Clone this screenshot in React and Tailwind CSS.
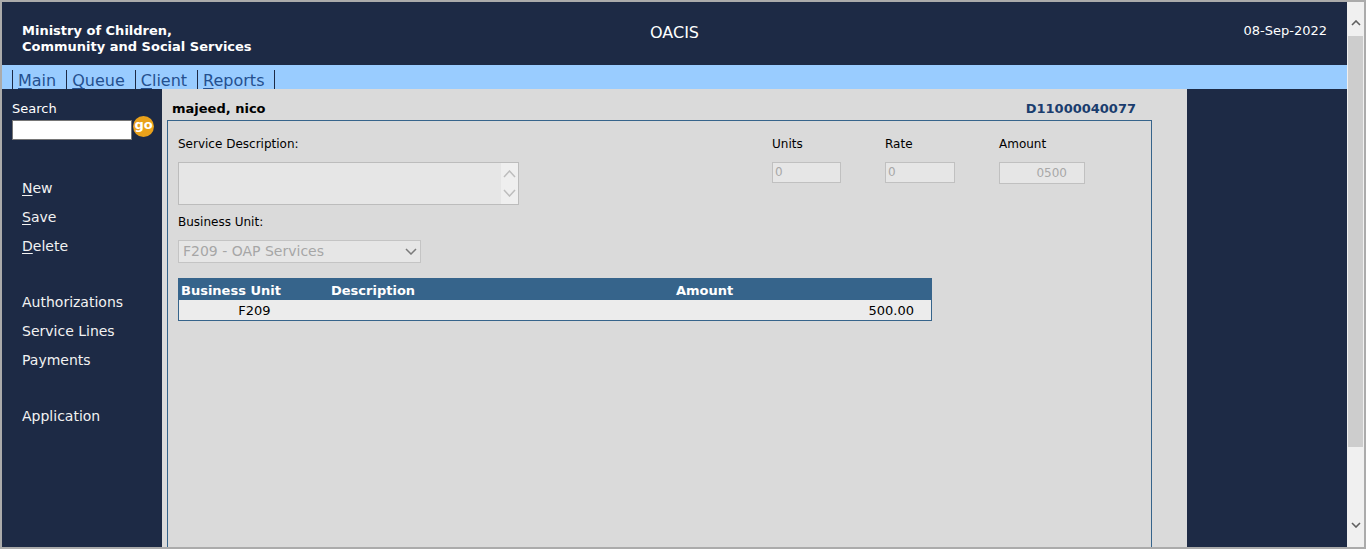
export default function App() {
  const Chevron = ({ up, className, color = "#606060", w = 10, h = 6, sw = 1.6 }) => (
    <svg width={w} height={h} viewBox={`0 0 ${w} ${h}`} className={className}>
      <polyline
        points={up ? `1,${h - 1} ${w / 2},1 ${w - 1},${h - 1}` : `1,1 ${w / 2},${h - 1} ${w - 1},1`}
        fill="none"
        stroke={color}
        strokeWidth={sw}
      />
    </svg>
  );

  const navItems = [
    ["M", "ain"],
    ["Q", "ueue"],
    ["C", "lient"],
    ["R", "eports"],
  ];

  return (
    <div className="w-[1366px] h-[549px] border-2 border-[#ababab] flex overflow-hidden font-['DejaVu_Sans',sans-serif] text-black">
      <div className="w-[1345px] shrink-0 flex flex-col">
        {/* Header */}
        <div className="h-[63px] shrink-0 bg-[#1d2a45] grid grid-cols-3 px-[20px] pt-[21px] text-white">
          <div className="text-[13px] leading-[16px] font-bold">
            <div>Ministry of Children,</div>
            <div>Community and Social Services</div>
          </div>
          <div className="text-center text-[16px] leading-[20px]">OACIS</div>
          <div className="text-right text-[13px] leading-[16px]">08-Sep-2022</div>
        </div>
        {/* Nav */}
        <div className="h-[24px] shrink-0 bg-[#99ccff] pt-[5px] pl-[10px] flex">
          {navItems.map(([a, b], i) => (
            <div
              key={i}
              className={
                "h-[19px] pt-[2px] leading-[18px] text-[16px] pl-[5px] pr-[10px] border-l border-[#1d2a45] text-[#24508f]" +
                (i === navItems.length - 1 ? " border-r" : "")
              }
            >
              <span className="underline underline-offset-2">{a}</span>
              {b}
            </div>
          ))}
        </div>
        {/* Body */}
        <div className="flex-1 flex min-h-0">
          {/* Sidebar */}
          <div className="w-[160px] shrink-0 bg-[#1d2a45] pt-[11px] text-white">
            <div className="pl-[10px]">
              <div className="h-[16px] pt-[1px] text-[13px] leading-[16px]">Search</div>
              <div className="flex items-start">
                <div className="mt-[4px] w-[120px] h-[20px] bg-white border border-[#767676]" />
                <div className="ml-[1px] w-[21px] h-[21px] rounded-full bg-[#e9a11b] text-white font-bold text-[13px] leading-[18px] flex justify-center">
                  go
                </div>
              </div>
            </div>
            <div className="pl-[20px] mt-[39px] text-[14px] leading-[18px] text-[#f2f2f2]">
              <div className="h-[29px]">
                <span className="underline underline-offset-2">N</span>ew
              </div>
              <div className="h-[29px]">
                <span className="underline underline-offset-2">S</span>ave
              </div>
              <div className="h-[29px]">
                <span className="underline underline-offset-2">D</span>elete
              </div>
              <div className="mt-[27px] h-[29px]">Authorizations</div>
              <div className="h-[29px]">Service Lines</div>
              <div className="h-[29px]">Payments</div>
              <div className="mt-[27px] h-[29px]">Application</div>
            </div>
          </div>

          {/* Main */}
          <div className="w-[1025px] shrink-0 bg-[#dadada] pt-[11px] pl-[5px]">
            <div className="w-[985px]">
              <div className="h-[20px] pt-[1px] flex justify-between pl-[5px] pr-[16px] text-[13px] leading-[16px] font-bold">
                <span>majeed, nico</span>
                <span className="text-[#1a3d6e]">D11000040077</span>
              </div>
              <div className="h-[430px] border border-b-0 border-[#36648b] pt-[16px] pl-[10px] text-[12px] leading-[15px]">
                <div className="flex items-start">
                  <div className="w-[594px] shrink-0">
                    <div>Service Description:</div>
                    <div className="mt-[10px] w-[341px] h-[43px] border border-[#bcbcbc] bg-[#e6e6e6] flex justify-end">
                      <div className="w-[17px] h-full bg-[#efefef] flex flex-col items-center justify-between py-[7px]">
                        <Chevron up color="#bdbdbd" w={13} h={8} sw={1.5} />
                        <Chevron color="#bdbdbd" w={13} h={8} sw={1.5} />
                      </div>
                    </div>
                    <div className="mt-[10px]">Business Unit:</div>
                    <div className="mt-[10px] w-[243px] h-[23px] border border-[#c4c4c4] bg-[#e6e6e6] flex items-center justify-between pl-[4px] pr-[3px] text-[14px] text-[#a6a6a6]">
                      <span>F209 - OAP Services</span>
                      <Chevron color="#7a7a7a" w={12} h={7} sw={1.5} />
                    </div>
                  </div>
                  <div className="w-[113px] shrink-0">
                    <div>Units</div>
                    <div className="mt-[10px] w-[69px] h-[21px] border border-[#c0c0c0] bg-[#e6e6e6] pl-[2px] leading-[19px] text-[#a8a8a8]">
                      0
                    </div>
                  </div>
                  <div className="w-[114px] shrink-0">
                    <div>Rate</div>
                    <div className="mt-[10px] w-[70px] h-[21px] border border-[#c0c0c0] bg-[#e6e6e6] pl-[2px] leading-[19px] text-[#a8a8a8]">
                      0
                    </div>
                  </div>
                  <div className="shrink-0">
                    <div>Amount</div>
                    <div className="mt-[10px] w-[86px] h-[22px] border border-[#c0c0c0] bg-[#e6e6e6] pr-[17px] text-right leading-[20px] text-[#a8a8a8]">
                      0500
                    </div>
                  </div>
                </div>

                {/* Table */}
                <div className="mt-[15px] w-[754px] border border-[#36648b] text-[13px]">
                  <div className="h-[21px] pt-[1px] bg-[#36648b] flex text-white font-bold leading-[21px]">
                    <div className="w-[151px] shrink-0 pl-[2px]">Business Unit</div>
                    <div className="w-[345px] shrink-0 pl-[1px]">Description</div>
                    <div className="flex-1 pl-[1px]">Amount</div>
                  </div>
                  <div className="h-[20px] pt-[1px] bg-[#ececec] flex leading-[19px]">
                    <div className="w-[151px] shrink-0 text-center">F209</div>
                    <div className="w-[345px] shrink-0" />
                    <div className="flex-1 text-right pr-[17px]">500.00</div>
                  </div>
                </div>
              </div>
            </div>
          </div>

          {/* Right dark panel */}
          <div className="flex-1 bg-[#1d2a45]" />
        </div>
      </div>

      {/* Scrollbar */}
      <div className="w-[17px] shrink-0 bg-[#f0f0f0] flex flex-col">
        <div className="h-[34px] pt-[8px] flex items-center justify-center">
          <Chevron up w={10} h={6} sw={1.6} />
        </div>
        <div className="h-[411px] mx-[1px] bg-[#cdcdcd]" />
        <div className="flex-1" />
        <div className="h-[44px] flex items-center justify-center">
          <Chevron w={10} h={6} sw={1.6} />
        </div>
      </div>
    </div>
  );
}
